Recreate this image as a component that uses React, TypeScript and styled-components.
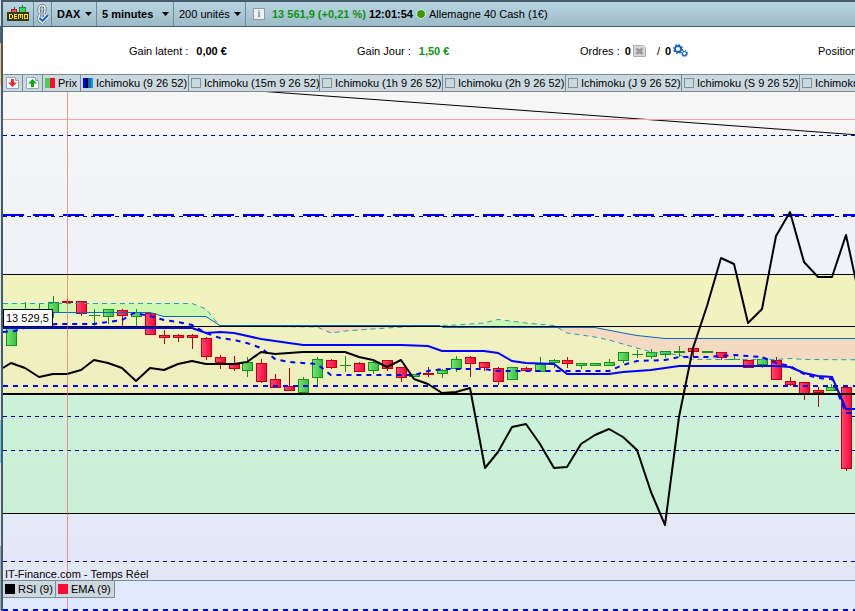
import React from "react";
import styled, { createGlobalStyle } from "styled-components";

const GlobalStyle = createGlobalStyle`
  * { box-sizing: border-box; }
  html, body, #root { margin: 0; height: 100%; }
  body {
    font: 11px/16px "Liberation Sans", Arial, sans-serif;
    color: #000;
    overflow: hidden;
    background: #fff;
  }
`;

const Page = styled.div`
  min-height: 100vh;
  display: flex;
`;

const Strip = styled.div`
  flex: none;
  width: 3px;
  border-right: 2px solid #465a67;
  background: linear-gradient(
    #d5e1ea 0 26px, #4b6290 26px 43px, #fdc36c 43px 85px, #dfe6ee 85px 420px,
    #62cdfb 420px 463px, #dfe6ee 463px 546px, #94adb5 546px
  );
`;

const Main = styled.main`
  flex: 1;
  min-width: 0;
  display: flex;
  flex-direction: column;
  border-top: 2px solid #465a67;
`;

const Toolbar = styled.header`
  display: flex;
  height: 25px;
  background: linear-gradient(#b9d5e1, #9bbbc8);
  border-bottom: 1px solid #465a67;
  white-space: nowrap;
`;

const ToolButton = styled.button<{ $width: number }>`
  flex: none;
  width: ${(p) => p.$width}px;
  padding: 0;
  border: 0;
  border-right: 1px solid #6d8995;
  background: none;
  display: flex;
  align-items: center;
  justify-content: center;
`;

const Picker = styled.label<{ $width: number }>`
  flex: none;
  width: ${(p) => p.$width}px;
  padding: 0 4px 0 5px;
  border-right: 1px solid #6d8995;
  display: flex;
  align-items: center;
  justify-content: space-between;
`;

const PickerSelect = styled.select<{ $bold?: boolean }>`
  appearance: none;
  border: 0;
  padding: 0;
  background: none;
  color: #000;
  font: ${(p) => (p.$bold ? "bold" : "normal")} 11px/16px "Liberation Sans", Arial, sans-serif;
`;

const Quote = styled.div`
  display: flex;
  align-items: center;
  gap: 3px;
  padding-left: 7px;
`;

const InfoButton = styled.button`
  width: 12px;
  height: 12px;
  margin-right: 4px;
  padding: 0;
  border: 1px solid #909ba1;
  background: #eef2f4;
  color: #7f8a90;
  font: bold 10px/10px "Liberation Serif", serif;
`;

const Change = styled.strong`
  color: #0c9512;
`;

const Dot = styled.span`
  width: 10px;
  height: 10px;
  border: 1px solid #d9efd2;
  border-radius: 50%;
  background: #3f9a09;
`;

const Stats = styled.section`
  display: grid;
  grid-template-columns: 228fr 223fr 238fr 37fr;
  align-items: center;
  height: 47px;
  padding-left: 126px;
  background: #fff;
  white-space: nowrap;
`;

const Stat = styled.div`
  display: flex;
  align-items: center;
  min-width: 0;
  gap: 8px;
`;

const Count = styled.span`
  display: flex;
  align-items: center;
  gap: 2px;
`;

const Orders = styled(Stat)`
  gap: 5px;
`;

const PlainButton = styled.button`
  display: flex;
  padding: 0;
  border: 0;
  background: none;
`;

const Legend = styled.div`
  display: flex;
  height: 18px;
  overflow: hidden;
  background: #cbd9df;
  border-top: 1px solid #778c95;
  border-bottom: 1px solid #778c95;
`;

const LegendButton = styled(PlainButton)`
  flex: none;
  width: 20px;
  align-items: center;
  justify-content: center;
  border-right: 1px solid #778c95;
`;

const LegendItem = styled.label<{ $width: number }>`
  flex: none;
  width: ${(p) => p.$width}px;
  display: flex;
  align-items: center;
  gap: 3px;
  padding: 0 2px;
  border-right: 1px solid #778c95;
  white-space: nowrap;
`;

const Box = styled.input<{ $fill?: string }>`
  appearance: none;
  flex: none;
  width: 10px;
  height: 10px;
  margin: 0;
  border: ${(p) => (p.$fill ? "0" : "1px solid #7f9199")};
  background: ${(p) => p.$fill ?? "transparent"};
`;

const Pane = styled.section`
  position: relative;
  background: linear-gradient(#f7f7f6, #eef1f8 38%, #e1e7f7);
`;

const Plot = styled.svg<{ $height: number }>`
  display: block;
  width: 100%;
  height: ${(p) => p.$height}px;
`;

const PriceTag = styled.output`
  position: absolute;
  left: 0;
  top: 217px;
  width: 50px;
  height: 18px;
  padding-left: 2px;
  border: 1px solid #000;
  background: #fff;
`;

const Credit = styled.div`
  position: absolute;
  left: 2px;
  bottom: -2px;
`;

const LowerPane = styled.section`
  position: relative;
  flex: 1;
  border-top: 1px solid #778c95;
  background: #e0eaff;
`;

const LowerLegend = styled.div`
  position: absolute;
  left: 0;
  top: 0;
  display: flex;
  height: 17px;
  background: #cbd9df;
  border-bottom: 1px solid #778c95;
`;

type Candle = [x: number, top: number, bottom: number, high: number, low: number, up: 0 | 1];

const candles: Candle[] = [
  [11, 327, 345, 327, 345, 1], [25, 310, 314, 302, 318, 1], [39, 310, 314, 304, 318, 1],
  [53, 302, 312, 296, 317, 1], [67, 301, 302, 299, 303, 0], [81, 301, 313, 301, 315, 0],
  [94, 315, 315, 309, 326, 1], [108, 309, 316, 309, 323, 1], [122, 310, 315, 309, 325, 0],
  [136, 312, 316, 309, 326, 1], [150, 313, 334, 313, 334, 0], [164, 335, 337, 330, 343, 0],
  [178, 335, 337, 334, 341, 0], [192, 335, 337, 334, 348, 0], [206, 338, 356, 337, 359, 0],
  [220, 357, 362, 355, 368, 0], [234, 364, 368, 356, 370, 0], [247, 362, 370, 357, 376, 1],
  [261, 363, 381, 359, 382, 0], [275, 379, 387, 374, 387, 0], [289, 386, 390, 368, 390, 0],
  [303, 379, 392, 377, 392, 1], [317, 359, 377, 357, 385, 1], [331, 360, 367, 359, 368, 0],
  [345, 365, 365, 356, 371, 1], [359, 363, 371, 362, 371, 0], [373, 362, 370, 359, 373, 1],
  [387, 360, 368, 360, 370, 0], [401, 367, 377, 367, 381, 0], [414, 374, 376, 374, 376, 1],
  [428, 373, 374, 367, 376, 0], [442, 370, 373, 369, 377, 1], [456, 359, 368, 356, 371, 1],
  [470, 357, 363, 356, 376, 0], [484, 362, 367, 362, 370, 0], [498, 368, 381, 367, 384, 0],
  [512, 367, 379, 367, 379, 1], [526, 368, 370, 367, 371, 0], [540, 364, 371, 357, 371, 1],
  [554, 360, 362, 359, 367, 1], [567, 360, 363, 357, 367, 0], [581, 363, 365, 363, 368, 1],
  [595, 363, 365, 363, 365, 1], [609, 362, 365, 359, 365, 1], [623, 352, 360, 352, 362, 1],
  [637, 354, 354, 350, 357, 1], [651, 352, 356, 349, 358, 1], [665, 351, 354, 351, 357, 1],
  [679, 351, 352, 346, 356, 1], [693, 348, 351, 346, 357, 0], [707, 351, 352, 351, 352, 1],
  [721, 352, 357, 352, 359, 0], [734, 359, 359, 354, 359, 1], [748, 360, 367, 360, 367, 0],
  [762, 359, 364, 357, 367, 1], [776, 360, 379, 357, 379, 0], [790, 381, 384, 377, 385, 0],
  [804, 382, 393, 382, 399, 0], [818, 390, 392, 387, 406, 0], [831, 387, 390, 384, 390, 1],
  [846, 387, 468, 387, 470, 0],
];

const rsi =
  "3,368 11,363 25,368 39,377 53,374 67,374 81,370 94,360 108,363 122,368 136,381 150,368 164,370 178,364 192,361 206,364 234,364 247,362 261,352 275,354 303,352 345,352 359,357 373,360 387,367 401,360 414,379 428,384 442,393 456,392 470,388 485,468 498,452 512,427 526,424 540,444 554,468 567,467 581,444 595,435 609,429 623,437 637,450 651,492 665,525 679,417 693,348 707,306 721,258 734,264 748,323 762,309 776,236 790,212 804,262 818,277 832,277 846,235 856,281";
const kijun =
  "3,328 192,328 206,333 220,332 234,333 261,339 289,343 303,345 401,345 428,346 442,351 484,351 498,353 512,361 526,363 554,364 567,374 609,374 623,372 637,371 651,370 679,366 776,366 790,367 804,373 818,376 832,377 846,409 900,409";
const tenkan =
  "3,332 15,331 24,328 56,324 94,324 108,322 122,320 134,313 150,316 164,320 178,322 192,325 206,333 220,338 234,340 247,343 261,348 275,359 289,362 317,364 331,375 414,375 428,371 442,369 484,369 498,371 609,371 623,365 637,361 665,360 679,357 707,357 721,356 734,355 762,357 776,363 790,366 804,374 818,378 832,379 846,413 900,413";
const spanA =
  "3,303.5 192,303.5 206,309 220,326 317,327 331,333 345,331 387,328 420,326 456,325 484,323 498,319.5 526,323 554,325.5 567,333 595,337 609,340 630,346 651,352 679,355 693,359.5 776,359.5 790,358.5 804,359.5 900,360";
const spanB =
  "3,312.5 150,312.5 164,316.5 206,316.5 220,325.5 440,325.5 443,327.5 595,327.5 623,333 637,335.5 665,338.5 900,338.5";

function Level({ y, color, width = 1, dash }: { y: number; color: string; width?: number; dash?: string }) {
  return <line x1="3" x2="200%" y1={y} y2={y} stroke={color} strokeWidth={width} strokeDasharray={dash} shapeRendering="crispEdges" />;
}

function CandleShape({ bar: [x, top, bottom, high, low, up] }: { bar: Candle }) {
  const edge = up ? "#149414" : "#c0000c";
  return (
    <g stroke={edge} shapeRendering="crispEdges">
      <line x1={x + 0.5} x2={x + 0.5} y1={high} y2={low + 1} />
      <rect x={x - 4.5} y={top + 0.5} width="10" height={bottom - top} fill={up ? "url(#up)" : "url(#down)"} />
      {bottom === top && <line x1={x - 5} x2={x + 6} y1={top + 0.5} y2={top + 0.5} />}
    </g>
  );
}

function MainPlot() {
  return (
    <Plot $height={488} role="img" aria-label="DAX 5 minutes">
      <defs>
        <linearGradient id="up"><stop offset="0" stopColor="#75e575" /><stop offset="1" stopColor="#38bd43" /></linearGradient>
        <linearGradient id="down"><stop offset="0" stopColor="#ff4878" /><stop offset="1" stopColor="#fa0732" /></linearGradient>
        <linearGradient id="yellow" x2="0" y2="1"><stop stopColor="#f2f4c0" /><stop offset="1" stopColor="#edeebd" /></linearGradient>
        <linearGradient id="green" x2="0" y2="1"><stop stopColor="#cdf2db" /><stop offset="1" stopColor="#c9efd5" /></linearGradient>
      </defs>
      <g transform="translate(-3 -92)" fill="none">
        <rect x="3" y="274" width="100%" height="120" fill="url(#yellow)" />
        <rect x="3" y="394" width="100%" height="120" fill="url(#green)" />
        <path fill="#cdf8b2" d="M3 303.5H192L206 309L220 325.5L206 316.5H164L150 312.5H3ZM440 326L484 323L498 319.5L526 323L556 327Z" />
        <path fill="#f3dac0" d="M317 327L331 333L345 331L401 327ZM557 327.5H595L623 333L637 335.5L665 338.5H900V360L804 359.5L790 358.5L776 359.5H693L679 355L651 352L630 346L609 340L595 337L567 333Z" />
        <Level y={135.5} color="#00009a" dash="4 4" />
        <Level y={216.5} color="#00009a" dash="4 4" />
        <Level y={215} color="#0000f5" width={2} dash="21 9" />
        <Level y={416.5} color="#00009a" dash="4 4" />
        <Level y={450.5} color="#00009a" dash="4 4" />
        <Level y={561.5} color="#00009a" dash="4 4" />
        {candles.map((bar) => <CandleShape key={bar[0]} bar={bar} />)}
        <polyline points={spanA} stroke="#24a3b8" strokeDasharray="5 4" />
        <polyline points={spanB} stroke="#0866c4" />
        <polyline points={tenkan} stroke="#00f" strokeWidth="2" strokeDasharray="5 5" />
        <polyline points={kijun} stroke="#00f" strokeWidth="2" />
        <Level y={386} color="#00f" width={2} dash="5 5" />
        <Level y={274.5} color="#000" />
        <Level y={326.5} color="#000" />
        <Level y={394} color="#000" width={2} />
        <Level y={513.5} color="#000" />
        <line x1="258" y1="91" x2="900" y2="138" stroke="#000" />
        <polyline points={rsi} stroke="#000" strokeWidth="2" strokeLinejoin="round" />
        <path d="M67.5 92V580" stroke="#f25d63" strokeOpacity=".65" />
        <Level y={119.5} color="#f4a5a8" />
      </g>
    </Plot>
  );
}

function LowerPlot() {
  return (
    <Plot $height={30} aria-hidden="true">
      <g transform="translate(-3 -581)">
        <path d="M67.5 581V611" stroke="#f25d63" strokeOpacity=".65" />
        <Level y={610} color="#00f" width={2} dash="5 5" />
      </g>
    </Plot>
  );
}

function Caret() {
  return <svg width="7" height="4" viewBox="0 0 7 4" aria-hidden="true"><path d="M0 0H7L3.5 4Z" /></svg>;
}

function DemoIcon() {
  return (
    <svg width="22" height="18" viewBox="0 0 22 18" aria-hidden="true" shapeRendering="crispEdges">
      <path d="M7 2V8M15 0V7" stroke="#465a46" />
      <rect x="4.5" y="4.5" width="5" height="3" fill="#f15555" stroke="#b01820" />
      <rect x="12.5" y="2.5" width="6" height="5" fill="#38d256" stroke="#17903b" />
      <rect y="7" width="22" height="9" rx="1" fill="#343719" />
      <path fill="none" stroke="#ffdd13" d="M2.5 9V14M2 9.500H5M5.500 10V13M2 13.500H5M10 9.500H7.500V13.500H10M8 11.500H10M11.500 14V9.500H15.500V14M13.500 10V13M17.500 9.500H20.500V13.500H17.500Z" />
    </svg>
  );
}

function LinkIcon() {
  return (
    <svg width="12" height="20" viewBox="0 0 12 20" fill="none" aria-hidden="true">
      <rect x="2" y="1.500" width="6" height="8" rx="3" stroke="#596775" strokeWidth="3" />
      <rect x="2" y="10" width="6" height="8" rx="3" stroke="#596775" strokeWidth="3" />
      <rect x="2" y="1.500" width="6" height="8" rx="3" stroke="#eef4f8" strokeWidth="1.500" />
      <rect x="2" y="10" width="6" height="8" rx="3" stroke="#eef4f8" strokeWidth="1.500" />
      <path d="M5 6V13" stroke="#596775" strokeWidth="3" />
      <path d="M5 6V13" stroke="#fff" />
      <path d="M2.500 14L5.500 17L11 11" stroke="#fff" strokeWidth="4" />
      <path d="M2.500 14L5.500 17L11 11" stroke="#1763d2" strokeWidth="2.200" />
    </svg>
  );
}

function PageArrowIcon({ up }: { up?: boolean }) {
  return (
    <svg width="13" height="12" viewBox="0 0 13 12" aria-hidden="true">
      <path d="M.5 .5H9.500L12.500 3.500V11.500H.5Z" fill="#f8fbfc" stroke="#8fa9bd" />
      <path d="M9.500 .5V3.500H12.500" fill="#c9dae5" stroke="#8fa9bd" />
      {up
        ? <path d="M6.500 2L11 6.500H8V10H5V6.500H2Z" fill="#0daa19" />
        : <path d="M5 2H8V5.500H11L6.500 10L2 5.500H5Z" fill="#df3038" />}
    </svg>
  );
}

function CancelIcon() {
  return (
    <svg width="13" height="12" viewBox="0 0 13 12" aria-hidden="true">
      <path d="M.5 .5H10L12.500 3V11.500H.5Z" fill="#d8d8d8" stroke="#ababab" />
      <path d="M3.500 3.500L9.500 9M9.500 3.500L3.500 9" stroke="#9c9c9c" strokeWidth="3" />
    </svg>
  );
}

function GearsIcon() {
  return (
    <svg width="15" height="13" viewBox="0 0 15 13" fill="none" aria-hidden="true">
      <circle cx="5" cy="5" r="4.200" stroke="#1762bd" strokeWidth="1.600" strokeDasharray="1.650 1.650" />
      <circle cx="5" cy="5" r="3" stroke="#1762bd" strokeWidth="1.800" />
      <circle cx="11.500" cy="9.500" r="2.900" stroke="#1762bd" strokeWidth="1.200" strokeDasharray="1.140 1.140" />
      <circle cx="11.500" cy="9.500" r="2" stroke="#1762bd" strokeWidth="1.200" />
    </svg>
  );
}

const priceFill = "linear-gradient(90deg, #49d154 50%, #ff0835 50%)";
const cloudFill = "linear-gradient(90deg, #00f 0 30%, #001 30% 50%, #0869c8 50% 80%, #159cc9 80%)";
const ichimokus = [
  { label: "Ichimoku (15m 9 26 52)", width: 131 },
  { label: "Ichimoku (1h 9 26 52)", width: 123 },
  { label: "Ichimoku (2h 9 26 52)", width: 123 },
  { label: "Ichimoku (J 9 26 52)", width: 116 },
  { label: "Ichimoku (S 9 26 52)", width: 118 },
  { label: "Ichimoku", width: 118 },
];

export default function App() {
  return (
    <>
      <GlobalStyle />
      <Page>
        <Strip />
        <Main>
          <Toolbar>
            <ToolButton $width={31} aria-label="Demo"><DemoIcon /></ToolButton>
            <ToolButton $width={18} aria-label="Lien"><LinkIcon /></ToolButton>
            <Picker $width={45}>
              <PickerSelect $bold aria-label="Valeur"><option>DAX</option></PickerSelect><Caret />
            </Picker>
            <Picker $width={77}>
              <PickerSelect $bold aria-label="Période"><option>5 minutes</option></PickerSelect><Caret />
            </Picker>
            <Picker $width={72}>
              <PickerSelect aria-label="Historique"><option>200 unités</option></PickerSelect><Caret />
            </Picker>
            <Quote>
              <InfoButton>i</InfoButton>
              <Change>13 561,9 (+0,21 %)</Change>
              <strong>12:01:54</strong>
              <Dot />
              <span>Allemagne 40 Cash (1€)</span>
            </Quote>
          </Toolbar>
          <Stats>
            <Stat><span>Gain latent :</span><strong>0,00 €</strong></Stat>
            <Stat><span>Gain Jour :</span><Change>1,50 €</Change></Stat>
            <Orders>
              <span>Ordres :</span>
              <Count><strong>0</strong><PlainButton aria-label="Annuler"><CancelIcon /></PlainButton></Count>
              <Count><span>&nbsp; /</span></Count>
              <Count><strong>0</strong><PlainButton aria-label="Réglages"><GearsIcon /></PlainButton></Count>
            </Orders>
            <Stat>Position</Stat>
          </Stats>
          <Legend>
            <LegendButton aria-label="Descendre"><PageArrowIcon /></LegendButton>
            <LegendButton aria-label="Monter"><PageArrowIcon up /></LegendButton>
            <LegendItem $width={38}><Box type="checkbox" defaultChecked $fill={priceFill} />Prix</LegendItem>
            <LegendItem $width={108}><Box type="checkbox" defaultChecked $fill={cloudFill} />Ichimoku (9 26 52)</LegendItem>
            {ichimokus.map((item) => (
              <LegendItem key={item.label} $width={item.width}><Box type="checkbox" />{item.label}</LegendItem>
            ))}
          </Legend>
          <Pane>
            <MainPlot />
            <PriceTag>13 529,5</PriceTag>
            <Credit>IT-Finance.com - Temps Réel</Credit>
          </Pane>
          <LowerPane>
            <LowerPlot />
            <LowerLegend>
              <LegendItem $width={53}><Box type="checkbox" defaultChecked $fill="#000" />RSI (9)</LegendItem>
              <LegendItem $width={59}><Box type="checkbox" defaultChecked $fill="#ff0835" />EMA (9)</LegendItem>
            </LowerLegend>
          </LowerPane>
        </Main>
      </Page>
    </>
  );
}
